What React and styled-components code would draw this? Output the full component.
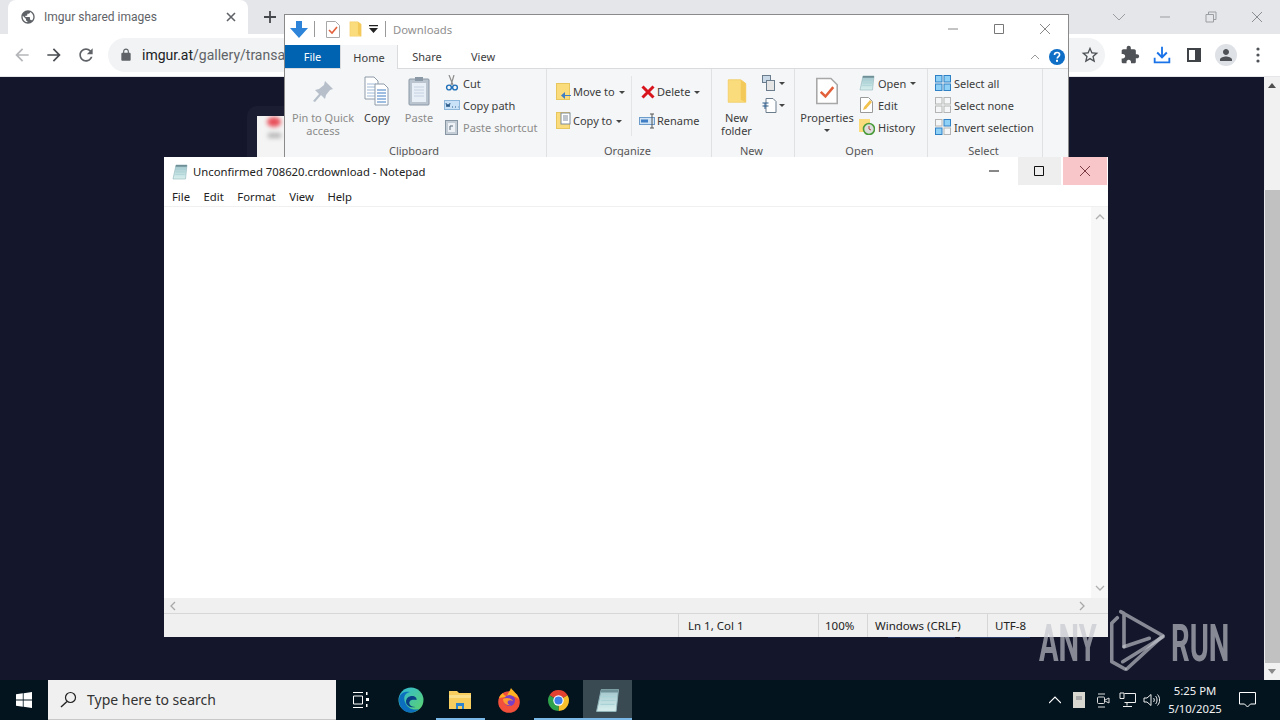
import React from 'react'
import styled, { createGlobalStyle } from 'styled-components'

const Global = createGlobalStyle`
  html, body { margin: 0; padding: 0; width: 1280px; height: 720px; overflow: hidden; background: #14172b; }
  * { box-sizing: border-box; }
`

const Desktop = styled.div`
  position: relative;
  width: 1280px;
  height: 720px;
  display: flex;
  flex-direction: column;
  overflow: hidden;
  font-family: "Noto Sans", sans-serif;
`

/* browser chrome */
const TabStrip = styled.div`
  height: 34px;
  flex-shrink: 0;
  background: #e4e6ea;
  display: flex;
  align-items: stretch;
  padding-left: 8px;
`
const Tab = styled.div`
  width: 240px;
  background: #fff;
  border-radius: 8px 8px 0 0;
  display: flex;
  align-items: center;
  padding: 0 11px 0 12px;
  color: #5f6368;
  font: 12px Roboto, sans-serif;
`
const TabTitle = styled.span`
  flex: 1;
  margin-left: 8px;
`
const NewTab = styled.div`
  width: 44px;
  display: flex;
  align-items: center;
  justify-content: center;
`
const StripControls = styled.div`
  margin-left: auto;
  display: flex;
  align-items: center;
`
const StripBtn = styled.div`
  width: 46px;
  height: 28px;
  display: flex;
  align-items: center;
  justify-content: center;
`
const Toolbar = styled.div`
  height: 43px;
  flex-shrink: 0;
  background: #fff;
  border-bottom: 1px solid #e4e6ea;
  display: flex;
  align-items: center;
  padding: 0 6px 1px 6px;
`
const NavBtn = styled.div`
  width: 32px;
  height: 32px;
  display: flex;
  align-items: center;
  justify-content: center;
`
const UrlPill = styled.div`
  flex: 1;
  height: 34px;
  margin: 0 9px 0 6px;
  background: #f1f3f4;
  border-radius: 17px;
  display: flex;
  align-items: center;
  padding: 0 5px 0 11px;
  font: 14px Roboto, sans-serif;
  color: #5f6368;
`
const Host = styled.span`
  margin-left: 9px;
  color: #202124;
`
const StarWrap = styled.div`
  margin-left: auto;
  display: flex;
`
const Avatar = styled.div`
  width: 22px;
  height: 22px;
  border-radius: 50%;
  background: #dee1e6;
  display: flex;
  align-items: center;
  justify-content: center;
`

/* page behind the windows */
const Page = styled.div`
  flex: 1;
  display: flex;
  min-height: 0;
`
const PageBody = styled.div`
  position: relative;
  flex: 1;
  background: #14172b;
  padding: 29px 0 0 247px;
`
const Card = styled.div`
  width: 200px;
  height: 200px;
  background: #1b1e33;
  border-radius: 10px;
  padding: 10px;
`
const Thumb = styled.div`
  width: 100%;
  height: 100%;
  background: #f4f4f4;
  position: relative;
  overflow: hidden;
`
const RedBlur = styled.div`
  position: absolute;
  left: 10px;
  top: 1px;
  width: 14px;
  height: 10px;
  border-radius: 50%;
  background: #e8505a;
  filter: blur(2px);
`
const GrayBlur = styled.div`
  position: absolute;
  left: 11px;
  top: 17px;
  width: 13px;
  height: 5px;
  background: #b5b5b5;
  filter: blur(2px);
`
const HiddenLinks = styled.div`
  position: absolute;
  left: 888px;
  top: 558px;
  display: flex;
  gap: 5px;
`
const HiddenLink = styled.div`
  width: ${p => p.$w}px;
  height: 3px;
  background: #2a3a6a;
`
const Scrollbar = styled.div`
  width: 16px;
  background: #f1f1f1;
  display: flex;
  flex-direction: column;
  align-items: center;
  justify-content: space-between;
  padding: 6px 0;
  position: relative;
`
const ScrollThumb = styled.div`
  position: absolute;
  left: 1px;
  right: 0;
  top: 113px;
  height: 473px;
  background: #c1c1c1;
`

/* taskbar */
const Taskbar = styled.div`
  height: 40px;
  flex-shrink: 0;
  background: #03141f;
  display: flex;
  align-items: stretch;
  color: #fff;
`
const StartBtn = styled.div`
  width: 48px;
  display: flex;
  align-items: center;
  justify-content: center;
`
const SearchBox = styled.div`
  width: 288px;
  background: #f0f0f0;
  border-bottom: 1px solid #c8c8c8;
  display: flex;
  align-items: center;
  padding-left: 12px;
  color: #333;
  font: 14px "Noto Sans", sans-serif;
`
const SearchText = styled.span`
  margin-left: 10px;
`
const TaskIcon = styled.div`
  width: ${p => p.$w || 49}px;
  margin-right: ${p => p.$mr || 0}px;
  display: flex;
  align-items: center;
  justify-content: center;
  background: ${p => (p.$active ? '#3a4a53' : 'transparent')};
  border-bottom: 2px solid ${p => (p.$open ? '#7ab8e8' : 'transparent')};
  border-top: 2px solid transparent;
`
const Tray = styled.div`
  margin-left: auto;
  display: flex;
  align-items: center;
`
const TrayIcon = styled.div`
  width: 24px;
  display: flex;
  justify-content: center;
`
const Clock = styled.div`
  width: 60px;
  margin-left: 2px;
  text-align: center;
  font: 11.3px/18px "Noto Sans", sans-serif;
  color: #f2f2f2;
`
const Notify = styled.div`
  width: 55px;
  padding-right: 11px;
  display: flex;
  justify-content: center;
`

/* explorer window */
const Explorer = styled.div`
  position: absolute;
  left: 284px;
  top: 14px;
  width: 785px;
  height: 143px;
  background: #fff;
  border: 1px solid #8a8a8a;
  border-bottom: 0;
  display: flex;
  flex-direction: column;
  font: 11px "Noto Sans", sans-serif;
  color: #3c3c3c;
`
const ExTitle = styled.div`
  height: 30px;
  flex-shrink: 0;
  display: flex;
  align-items: center;
  padding: 0 0 2px 5px;
`
const QuickSep = styled.div`
  width: 1px;
  height: 16px;
  background: #9a9a9a;
  margin: 0 ${p => p.$r}px 0 ${p => p.$l}px;
`
const QuickIcon = styled.div`
  width: ${p => p.$w}px;
  display: flex;
  justify-content: center;
`
const Dim = styled.span`
  color: #8f8f8f;
  font-size: 11.3px;
`
const ExControls = styled.div`
  margin-left: auto;
  display: flex;
  align-items: center;
`
const ExBtn = styled.div`
  width: 46px;
  display: flex;
  justify-content: center;
`
const ExTabs = styled.div`
  height: 24px;
  flex-shrink: 0;
  display: flex;
  align-items: stretch;
  border-bottom: 1px solid #dadbdc;
`
const FileTab = styled.div`
  width: 55px;
  background: #0063b1;
  color: #fff;
  display: flex;
  align-items: center;
  justify-content: center;
`
const HomeTab = styled.div`
  width: 58px;
  height: 24px;
  background: #f5f6f7;
  border: 1px solid #dadbdc;
  border-width: 0 1px;
  display: flex;
  align-items: center;
  justify-content: center;
`
const PlainTab = styled.div`
  width: ${p => p.$w}px;
  display: flex;
  align-items: center;
  justify-content: center;
`
const TabRight = styled.div`
  margin-left: auto;
  display: flex;
  align-items: center;
  gap: 9px;
  padding-right: 3px;
`
const Ribbon = styled.div`
  flex: 1;
  min-height: 0;
  background: #f5f6f7;
  display: flex;
  overflow: hidden;
`
const Group = styled.div`
  width: ${p => p.$w}px;
  flex-shrink: 0;
  border-right: 1px solid #dfe1e3;
  display: flex;
  flex-direction: column;
`
const GroupBody = styled.div`
  height: 75px;
  flex-shrink: 0;
  display: flex;
  padding: 3px 0 0 ${p => p.$pl || 0}px;
`
const GroupLabel = styled.div`
  text-align: center;
  line-height: 13px;
  padding-right: 3px;
  color: #555;
`
const LargeBtn = styled.div`
  width: ${p => p.$w}px;
  flex-shrink: 0;
  display: flex;
  flex-direction: column;
  align-items: center;
  text-align: center;
  line-height: 13px;
  white-space: nowrap;
  color: ${p => (p.$dim ? '#8b8b8b' : '#3c3c3c')};
`
const LargeIcon = styled.div`
  height: 38px;
  display: flex;
  align-items: center;
  margin-bottom: 1px;
`
const SmallCol = styled.div`
  display: flex;
  flex-direction: column;
  width: ${p => p.$w}px;
  flex-shrink: 0;
  margin-left: ${p => p.$ml || 0}px;
  padding-top: ${p => p.$pt || 0}px;
`
const SmallBtn = styled.div`
  height: ${p => p.$h || 22}px;
  display: flex;
  align-items: center;
  gap: ${p => (p.$tight ? 1 : 3)}px;
  white-space: nowrap;
  color: ${p => (p.$dim ? '#8b8b8b' : '#3c3c3c')};
`
const SmallIcon = styled.div`
  width: 17px;
  display: flex;
  justify-content: center;
  flex-shrink: 0;
`
const ColSep = styled.div`
  width: 1px;
  height: 60px;
  background: #e4e5e7;
  margin: 4px 7px 0 0;
`
const Caret = styled.span`
  display: block;
  margin: 1px 0 0 ${p => p.$ml || 0}px;
  border-style: solid;
  border-color: #444 transparent transparent;
  border-width: 3px 3px 0;
  width: 0;
  height: 0;
`
const LowCaret = styled(Caret)`
  margin-top: 5px;
`

/* notepad */
const Notepad = styled.div`
  position: absolute;
  left: 164px;
  top: 157px;
  width: 944px;
  height: 480px;
  background: #fff;
  display: flex;
  flex-direction: column;
  font: 11.3px "Noto Sans", sans-serif;
  color: #222;
`
const NpTitle = styled.div`
  height: 29px;
  flex-shrink: 0;
  display: flex;
  align-items: center;
  padding-left: 8px;
`
const NpTitleText = styled.span`
  margin-left: 5px;
`
const NpControls = styled.div`
  margin-left: auto;
  align-self: stretch;
  display: flex;
  gap: 2px;
  padding-right: 1px;
  height: 28px;
`
const NpBtn = styled.div`
  width: ${p => p.$w || 43}px;
  padding-right: ${p => p.$pr || 0}px;
  display: flex;
  align-items: center;
  justify-content: center;
  background: ${p => p.$bg || 'transparent'};
`
const NpMenu = styled.div`
  height: 21px;
  flex-shrink: 0;
  display: flex;
  align-items: center;
  padding-left: 8px;
  gap: 13.5px;
  border-bottom: 1px solid #f0f0f0;
`
const NpEdit = styled.div`
  flex: 1;
  display: flex;
  min-height: 0;
`
const NpText = styled.div`
  flex: 1;
  background: #fff;
`
const VBar = styled.div`
  width: 17px;
  background: #f7f7f7;
  display: flex;
  flex-direction: column;
  justify-content: space-between;
  align-items: center;
  padding: 5px 0;
`
const HBar = styled.div`
  height: 15px;
  flex-shrink: 0;
  background: #f0f0f0;
  display: flex;
  align-items: center;
  justify-content: space-between;
  padding: 0 21px 0 4px;
`
const NpStatus = styled.div`
  height: 24px;
  flex-shrink: 0;
  background: #f0f0f0;
  border-top: 1px solid #d7d7d7;
  display: flex;
  align-items: center;
  padding-left: 514px;
  font-size: 11.5px;
`
const StatusCell = styled.div`
  width: ${p => p.$w}px;
  flex-shrink: 0;
  height: 100%;
  border-left: 1px solid #d7d7d7;
  display: flex;
  align-items: center;
  padding-left: ${p => p.$pl}px;
  white-space: nowrap;
`

/* watermark */
const Watermark = styled.div`
  position: absolute;
  left: 1039px;
  top: 608px;
  height: 64px;
  display: flex;
  align-items: center;
  gap: 5px;
  color: rgba(196, 197, 205, 0.66);
  pointer-events: none;
`
const MarkText = styled.span`
  display: block;
  width: ${p => p.$w}px;
  font: 700 52px/64px Roboto, sans-serif;
  transform: scaleX(0.56);
  transform-origin: left center;
  white-space: nowrap;
  padding-top: 7px;
`

const S = ({ w = 16, h, vb = '0 0 16 16', children }) => (
  <svg width={w} height={h || w} viewBox={vb} style={{ display: 'block' }}>{children}</svg>
)
const M = ({ d, w = 20, fill = '#5f6368' }) => <S w={w} vb="0 0 24 24"><path d={d} fill={fill} /></S>

const Line = ({ w = 12, d, c = '#555', sw = 1 }) => (
  <S w={w} vb={`0 0 ${w} ${w}`}><path d={d} fill="none" stroke={c} strokeWidth={sw} /></S>
)

const ARROW_L = 'M20 11H7.83l5.59-5.59L12 4l-8 8 8 8 1.41-1.41L7.83 13H20v-2z'
const ARROW_R = 'M4 11h12.17l-5.59-5.59L12 4l8 8-8 8-1.41-1.41L16.17 13H4v-2z'
const RELOAD = 'M17.65 6.35C16.2 4.9 14.21 4 12 4c-4.42 0-7.99 3.58-7.99 8s3.57 8 7.99 8c3.73 0 6.84-2.55 7.73-6h-2.08c-.82 2.33-3.04 4-5.65 4-3.31 0-6-2.69-6-6s2.69-6 6-6c1.66 0 3.14.69 4.22 1.78L13 11h7V4l-2.35 2.35z'
const LOCK = 'M18 8h-1V6c0-2.76-2.24-5-5-5S7 3.24 7 6v2H6c-1.1 0-2 .9-2 2v10c0 1.1.9 2 2 2h12c1.1 0 2-.9 2-2V10c0-1.1-.9-2-2-2zM9 6c0-1.66 1.34-3 3-3s3 1.34 3 3v2H9V6z'
const STAR = 'M22 9.24l-7.19-.62L12 2 9.19 8.63 2 9.24l5.46 4.73L5.82 21 12 17.27 18.18 21l-1.63-7.03L22 9.24zM12 15.4l-3.76 2.27 1-4.28-3.32-2.88 4.38-.38L12 6.1l1.71 4.04 4.38.38-3.32 2.88 1 4.28L12 15.4z'
const PUZZLE = 'M20.5 11H19V7c0-1.1-.9-2-2-2h-4V3.5C13 2.12 11.88 1 10.5 1S8 2.12 8 3.5V5H4c-1.1 0-1.99.9-1.99 2v3.8H3.5c1.49 0 2.7 1.21 2.7 2.7s-1.21 2.7-2.7 2.7H2V20c0 1.1.9 2 2 2h3.8v-1.5c0-1.49 1.21-2.7 2.7-2.7 1.49 0 2.7 1.21 2.7 2.7V22H17c1.1 0 2-.9 2-2v-4h1.5c1.38 0 2.5-1.12 2.5-2.5S21.88 11 20.5 11z'
const PERSON = 'M12 12c2.21 0 4-1.79 4-4s-1.79-4-4-4-4 1.79-4 4 1.79 4 4 4zm0 2c-2.67 0-8 1.34-8 4v2h16v-2c0-2.66-5.33-4-8-4z'
const GLOBE = 'M12 2C6.48 2 2 6.48 2 12s4.48 10 10 10 10-4.48 10-10S17.52 2 12 2zm-1 17.93c-3.95-.49-7-3.85-7-7.93 0-.62.08-1.21.21-1.79L9 15v1c0 1.1.9 2 2 2v1.93zm6.9-2.54c-.26-.81-1-1.39-1.9-1.39h-1v-3c0-.55-.45-1-1-1H8v-2h2c.55 0 1-.45 1-1V7h2c1.1 0 2-.9 2-2v-.41c2.93 1.19 5 4.06 5 7.41 0 2.08-.8 3.97-2.1 5.39z'

const FolderGlyph = ({ w = 16, h = 20 }) => (
  <S w={w} h={h} vb="0 0 16 20">
    <path d="M1 1h10l4 3v15H1z" fill="#fbdc7c" stroke="#f0c95e" strokeWidth=".6" />
    <path d="M11 1v16l4 2V4z" fill="#f3c95a" />
  </S>
)
const CheckDoc = ({ w = 14, h = 17 }) => (
  <S w={w} h={h} vb="0 0 14 17">
    <path d="M.5.5h9l4 4v12H.5z" fill="#fff" stroke="#a8a8a8" />
    <path d="M3 9l3 3 5-6" fill="none" stroke="#e2603a" strokeWidth="1.6" />
  </S>
)
const PagesIcon = () => (
  <S w={26} h={30} vb="0 0 26 30">
    <path d="M1 1h9l4 4v18H1z" fill="#fff" stroke="#8d9aa8" />
    <path d="M3 8h9M3 11h9M3 14h9M3 17h9M3 20h9" stroke="#9db8d6" />
    <path d="M11 8h9l4 4v17H11z" fill="#fff" stroke="#8d9aa8" />
    <path d="M13 14h9M13 17h9M13 20h9M13 23h9M13 26h9" stroke="#3f7dc4" />
  </S>
)
const PasteIcon = () => (
  <S w={22} h={30} vb="0 0 22 30">
    <rect x="1" y="3" width="20" height="26" rx="1" fill="#b9c4cf" stroke="#8b98a6" />
    <rect x="4" y="7" width="14" height="19" fill="#e9eff6" />
    <path d="M6 11h10M6 14h10M6 17h10M6 20h10" stroke="#c4d2e2" />
    <rect x="7" y="1" width="8" height="4" fill="#8b98a6" />
  </S>
)
const PinIcon = () => (
  <S w={22} h={23} vb="0 0 22 23">
    <path d="M13 1l8 8-3 1-4 5-1 4-4-4-6 7-2-1 6-7-4-4 4-1 5-4z" fill="#b6bfca" />
  </S>
)
const Scissors = () => (
  <S w={14} h={16} vb="0 0 14 16">
    <path d="M9 0L6 10M4 0l4 10" stroke="#8d8d8d" strokeWidth="1.2" fill="none" />
    <circle cx="4" cy="12.5" r="2.4" fill="none" stroke="#1f6fb8" strokeWidth="1.4" />
    <circle cx="10" cy="12.5" r="2.4" fill="none" stroke="#1f6fb8" strokeWidth="1.4" />
  </S>
)
const PathIcon = () => (
  <S w={16} h={10} vb="0 0 16 10">
    <rect x=".5" y=".5" width="15" height="9" fill="#c9e2f7" stroke="#8db6da" />
    <path d="M2 3l1 4 1-3 1 3 1-4M8 7h1M11 7h1M14 7h.5" stroke="#2a5a8a" fill="none" />
  </S>
)
const ShortcutIcon = () => (
  <S w={13} h={16} vb="0 0 13 16">
    <rect x=".5" y="1.5" width="12" height="14" fill="#c4ccd5" stroke="#8895a3" />
    <rect x="3" y="4" width="7" height="9" fill="#eef2f6" />
    <path d="M5 11V7h3" stroke="#5a6b7c" fill="none" />
  </S>
)
const MoveIcon = ({ copy }) => (
  <S w={16} h={18} vb="0 0 16 18">
    <rect x=".5" y=".5" width="13" height="16" fill="#fbdc7c" stroke="#e8c65e" />
    {copy ? (
      <g>
        <rect x="5" y="1" width="9" height="11" fill="#fff" stroke="#7d8a98" />
        <path d="M7 4h5M7 6h5M7 8h5" stroke="#7d8a98" />
      </g>
    ) : (
      <path d="M15 12H9V9l-4 3.5L9 16v-3h6z" fill="#3f7dc4" />
    )}
  </S>
)
const DeleteX = () => (
  <S w={14} h={14} vb="0 0 14 14"><path d="M1.5 1.5l11 11M12.5 1.5l-11 11" stroke="#d8141c" strokeWidth="3" /></S>
)
const RenameIcon = () => (
  <S w={17} h={16} vb="0 0 17 16">
    <rect x=".5" y="4.5" width="15" height="7" fill="#cfe3f5" stroke="#6d9ccb" />
    <rect x="2" y="6.5" width="7" height="3" fill="#3f7dc4" />
    <path d="M11 1h4M13 1v14M11 15h4" stroke="#555" fill="none" />
  </S>
)
const NotepadIcon = ({ w = 16, h = 16, id = 'npg' }) => (
  <S w={w} h={h} vb="0 0 16 16">
    <defs>
      <linearGradient id={id} x1="0" y1="0" x2="0" y2="1">
        <stop offset="0" stopColor="#9fc4cb" />
        <stop offset="1" stopColor="#d8f0ee" />
      </linearGradient>
    </defs>
    <path d="M4 1h11l-1.500 14H1z" fill={`url(#${id})`} stroke="#8fb4ba" strokeWidth=".6" />
    <path d="M4 1h11l-.2 1.800H3.700z" fill="#6f8f96" />
    <path d="M4.500 5.500h9M4 8h9M3.500 10.500h9" stroke="#a8d2d6" strokeWidth=".7" />
  </S>
)
const EditIcon = () => (
  <S w={14} h={16} vb="0 0 14 16">
    <path d="M.5.5h8l4 4v11H.5z" fill="#fff" stroke="#9a9a9a" />
    <path d="M3 13l1-3 6-7 2 2-6 7z" fill="#f2c24e" />
  </S>
)
const HistoryIcon = () => (
  <S w={16} h={16} vb="0 0 16 16">
    <rect x="0" y="0" width="11" height="13" fill="#fbdc7c" />
    <circle cx="10" cy="10" r="5.5" fill="#ddd" stroke="#4a9b3a" strokeWidth="1.6" />
    <path d="M10 7v3l2 1" stroke="#b04040" fill="none" />
  </S>
)
const SelectGrid = ({ a = false, b = false }) => {
  const on = { fill: '#8fd0f7', stroke: '#2f80c4' }
  const off = { fill: 'none', stroke: '#b4b4b4' }
  const p = i => (i === 'a' ? (a ? on : off) : b ? on : off)
  return (
    <S w={16} h={16} vb="0 0 16 16">
      <rect x=".5" y=".5" width="6.5" height="6.5" {...p('a')} />
      <rect x="9" y=".5" width="6.5" height="6.5" {...p('b')} />
      <rect x=".5" y="9" width="6.5" height="6.5" {...p('b')} />
      <rect x="9" y="9" width="6.5" height="6.5" {...p('a')} />
    </S>
  )
}

const Edge = () => (
  <S w={26} vb="0 0 26 26">
    <defs>
      <linearGradient id="eg" x1="0" y1="0" x2="1" y2="1">
        <stop offset="0" stopColor="#2fb8d8" />
        <stop offset="1" stopColor="#5fd36a" />
      </linearGradient>
    </defs>
    <circle cx="13" cy="13" r="12.5" fill="url(#eg)" />
    <path d="M1 13C1 6 7 4 12 5c-5 1-7 5-5 10 2 6 8 9 14 7-3 3-7 3.500-9 3.500C6 25.500 1 20 1 13z" fill="#0c6fbe" />
    <path d="M8 15c0-4 3-6 6-6 3 0 5 2 4.500 4-4-1-8 0-7 4 .5 2 3 3 6 3-5 1-9-1-9.500-5z" fill="#0a3f86" />
  </S>
)
const Firefox = () => (
  <S w={24} h={26} vb="0 0 24 26">
    <circle cx="12" cy="15" r="10.800" fill="#f2503b" />
    <path d="M2 11c1-3 3-4 4-5 0 2 2 3 4 3 1-3 3-5 4-8 2 3 7 6 8 12-2-3-5-4-8-4z" fill="#ffb320" />
    <circle cx="12.500" cy="13.500" r="5.500" fill="#7a3fc4" />
    <path d="M6 12c3-2 8-1 10 2-2-1-4-1-5 0-1 2 0 4 3 4-4 1-8-2-8-6z" fill="#ff9a2e" />
  </S>
)
const Chrome = () => (
  <S w={25} vb="0 0 24 24">
    <path d="M12 12L3.300 7A10 10 0 0 1 20.700 7z" fill="#e3412f" />
    <path d="M12 12l8.700-5A10 10 0 0 1 12 22z" fill="#f7c02c" />
    <path d="M12 12v10A10 10 0 0 1 3.300 7z" fill="#2ea24a" />
    <circle cx="12" cy="12" r="5" fill="#fff" />
    <circle cx="12" cy="12" r="3.900" fill="#3d7fe6" />
  </S>
)

export default function App() {
  return (
    <Desktop>
      <Global />

      <TabStrip>
        <Tab>
          <M d={GLOBE} w={16} />
          <TabTitle>Imgur shared images</TabTitle>
          <Line d="M2 2l8 8M10 2l-8 8" c="#5f6368" sw={1.6} />
        </Tab>
        <NewTab><Line w={14} d="M7 1v12M1 7h12" c="#45484d" sw={1.8} /></NewTab>
        <StripControls>
          <StripBtn><Line d="M0 3l6 6 6-6" c="#9a9da1" /></StripBtn>
          <StripBtn><Line d="M1 6h10" c="#9a9da1" /></StripBtn>
          <StripBtn><Line d="M1 3.500h7.500v7.500H1zM3.500 3.500V1h7.500v7.500H8.500" c="#9a9da1" /></StripBtn>
          <StripBtn><Line d="M1 1l10 10M11 1L1 11" c="#8a8d91" /></StripBtn>
        </StripControls>
      </TabStrip>

      <Toolbar>
        <NavBtn><M d={ARROW_L} fill="#b4b6b9" /></NavBtn>
        <NavBtn><M d={ARROW_R} fill="#4a4d52" /></NavBtn>
        <NavBtn><M d={RELOAD} fill="#5f6368" /></NavBtn>
        <UrlPill>
          <M d={LOCK} w={14} />
          <Host>imgur.at</Host>/gallery/transa
          <StarWrap><M d={STAR} w={20} fill="#4f5257" /></StarWrap>
        </UrlPill>
        <NavBtn><M d={PUZZLE} fill="#4f5257" /></NavBtn>
        <NavBtn><M d="M11 3h2v9l3.500-3.500L18 10l-6 6-6-6 1.500-1.500L11 12zM3 15h2v4h14v-4h2v6H3z" w={22} fill="#1a73e8" /></NavBtn>
        <NavBtn>
          <S w={14} vb="0 0 14 14"><rect x="1" y="1" width="12" height="12" fill="none" stroke="#3f4246" strokeWidth="2" /><rect x="8" y="1" width="5" height="12" fill="#3f4246" /></S>
        </NavBtn>
        <NavBtn><Avatar><M d={PERSON} w={18} fill="#4f5257" /></Avatar></NavBtn>
        <NavBtn>
          <S w={4} h={16} vb="0 0 4 16"><circle cx="2" cy="2" r="1.600" fill="#4f5257" /><circle cx="2" cy="8" r="1.600" fill="#4f5257" /><circle cx="2" cy="14" r="1.600" fill="#4f5257" /></S>
        </NavBtn>
      </Toolbar>

      <Page>
        <PageBody>
          <Card>
            <Thumb><RedBlur /><GrayBlur /></Thumb>
          </Card>
          <HiddenLinks>
            <HiddenLink $w={67} />
            <HiddenLink $w={70} />
          </HiddenLinks>
        </PageBody>
        <Scrollbar>
          <ScrollThumb />
          <S w={8} h={5} vb="0 0 8 5"><path d="M4 0l4 5H0z" fill="#505050" /></S>
          <S w={8} h={5} vb="0 0 8 5"><path d="M4 5L0 0h8z" fill="#8a8a8a" /></S>
        </Scrollbar>
      </Page>

      <Taskbar>
        <StartBtn>
          <S w={16} vb="0 0 16 16"><path d="M0 2.300l6.800-1v6.300H0zM7.600 1.200L16 0v7.600H7.600zM0 8.400h6.800v6.300l-6.800-1zM7.600 8.400H16V16l-8.400-1.200z" fill="#fff" /></S>
        </StartBtn>
        <SearchBox>
          <S w={17} vb="0 0 17 17"><circle cx="10.500" cy="6.500" r="5" fill="none" stroke="#222" strokeWidth="1.200" /><path d="M7 10.500L1 16" stroke="#222" strokeWidth="1.400" /></S>
          <SearchText>Type here to search</SearchText>
        </SearchBox>
        <TaskIcon $w={48} $mr={2.5}>
          <S w={17} h={16} vb="0 0 17 16">
            <path d="M1 .5h10M1 15.500h10M1.500 4h9v8h-9z" fill="none" stroke="#fff" />
            <path d="M14 0h1.500v3H14zM14 6h3v3h-3zM14 12h1.500v3H14z" fill="#fff" />
          </S>
        </TaskIcon>
        <TaskIcon><Edge /></TaskIcon>
        <TaskIcon $open>
          <S w={24} h={22} vb="0 0 24 22">
            <path d="M1 2h8l2 2h12v16H1z" fill="#f8cf5e" />
            <rect x="1" y="6" width="22" height="3" fill="#fbe08c" />
            <path d="M8 14h8v6h-2v-3h-4v3H8z" fill="#2f86cf" />
          </S>
        </TaskIcon>
        <TaskIcon><Firefox /></TaskIcon>
        <TaskIcon $open><Chrome /></TaskIcon>
        <TaskIcon $open $active><NotepadIcon w={25} h={25} id="npg2" /></TaskIcon>
        <Tray>
          <TrayIcon><Line d="M0 9l6-6 6 6" c="#fff" sw={1.200} /></TrayIcon>
          <TrayIcon><S w={12} h={16} vb="0 0 12 16"><rect width="12" height="16" fill="#d8d8d0" /><rect x="3" y="4" width="6" height="4" fill="#aaa" /></S></TrayIcon>
          <TrayIcon>
            <S w={14} h={18} vb="0 0 14 18">
              <rect x="1.500" y="6" width="7" height="6.500" rx="1" fill="none" stroke="#ddd" />
              <path d="M9 9l4-2v5l-4-2M2 3h7M2 16h7" fill="none" stroke="#ddd" />
            </S>
          </TrayIcon>
          <TrayIcon>
            <S w={17} h={16} vb="0 0 17 16">
              <path d="M5.500 1.500h11v9h-11M1 1v5.500h4V1zM8 10.500v3M4 14.500h9" fill="none" stroke="#eee" />
            </S>
          </TrayIcon>
          <TrayIcon>
            <S w={17} h={14} vb="0 0 17 14">
              <path d="M1 5h3l4-3.500v11L4 9H1zM10.500 5c1 1 1 3 0 4M12.500 3c2 2 2 6 0 8M14.500 1.500c2.800 3 2.800 8 0 11" fill="none" stroke="#eee" />
            </S>
          </TrayIcon>
          <Clock>5:25 PM<br />5/10/2025</Clock>
          <Notify>
            <S w={17} h={16} vb="0 0 17 16"><path d="M.5.500h16v11.500h-5L8.500 15 5.500 12h-5z" fill="none" stroke="#fff" /></S>
          </Notify>
        </Tray>
      </Taskbar>

      <Explorer>
        <ExTitle>
          <S w={18} h={17} vb="0 0 18 17"><path d="M6 0h6v7h6l-9 10L0 7h6z" fill="#2d84d8" /></S>
          <QuickSep $l={6} $r={7} />
          <QuickIcon $w={22}><CheckDoc /></QuickIcon>
          <QuickIcon $w={22}><FolderGlyph w={13} h={16} /></QuickIcon>
          <QuickIcon $w={14}><S w={9} h={8} vb="0 0 9 8"><path d="M0 0h9v1.200H0zM0 3h9L4.500 8z" fill="#222" /></S></QuickIcon>
          <QuickSep $l={5} $r={7} />
          <Dim>Downloads</Dim>
          <ExControls>
            <ExBtn><Line d="M1 6h10" c="#888" /></ExBtn>
            <ExBtn><Line d="M1.500 1.500h9v9h-9z" c="#777" /></ExBtn>
            <ExBtn><Line d="M1 1l10 10M11 1L1 11" c="#888" /></ExBtn>
          </ExControls>
        </ExTitle>
        <ExTabs>
          <FileTab>File</FileTab>
          <HomeTab>Home</HomeTab>
          <PlainTab $w={58}>Share</PlainTab>
          <PlainTab $w={54}>View</PlainTab>
          <TabRight>
            <Line w={10} d="M1 7l4-4 4 4" c="#999" />
            <S w={16} vb="0 0 16 16">
              <circle cx="8" cy="8" r="8" fill="#0f6fc6" />
              <path d="M5.500 6c0-1.600 1.200-2.500 2.600-2.500s2.500.9 2.500 2.200c0 1.900-2.400 1.900-2.400 3.800" fill="none" stroke="#fff" strokeWidth="1.600" />
              <rect x="7" y="10.800" width="2" height="2" fill="#fff" />
            </S>
          </TabRight>
        </ExTabs>
        <Ribbon>
          <Group $w={262}>
            <GroupBody $pl={7}>
              <LargeBtn $w={62} $dim><LargeIcon><PinIcon /></LargeIcon>Pin to Quick<br />access</LargeBtn>
              <LargeBtn $w={46}><LargeIcon><PagesIcon /></LargeIcon>Copy</LargeBtn>
              <LargeBtn $w={38} $dim><LargeIcon><PasteIcon /></LargeIcon>Paste</LargeBtn>
              <SmallCol $w={100} $ml={5}>
                <SmallBtn><SmallIcon><Scissors /></SmallIcon>Cut</SmallBtn>
                <SmallBtn><SmallIcon><PathIcon /></SmallIcon>Copy path</SmallBtn>
                <SmallBtn $dim><SmallIcon><ShortcutIcon /></SmallIcon>Paste shortcut</SmallBtn>
              </SmallCol>
            </GroupBody>
            <GroupLabel>Clipboard</GroupLabel>
          </Group>
          <Group $w={165}>
            <GroupBody $pl={8}>
              <SmallCol $w={76} $pt={5}>
                <SmallBtn $h={29} $tight><SmallIcon><MoveIcon /></SmallIcon>Move to<Caret $ml={3} /></SmallBtn>
                <SmallBtn $h={29} $tight><SmallIcon><MoveIcon copy /></SmallIcon>Copy to<Caret $ml={3} /></SmallBtn>
              </SmallCol>
              <ColSep />
              <SmallCol $w={72} $pt={5}>
                <SmallBtn $h={29} $tight><SmallIcon><DeleteX /></SmallIcon>Delete<Caret $ml={3} /></SmallBtn>
                <SmallBtn $h={29} $tight><SmallIcon><RenameIcon /></SmallIcon>Rename</SmallBtn>
              </SmallCol>
            </GroupBody>
            <GroupLabel>Organize</GroupLabel>
          </Group>
          <Group $w={83}>
            <GroupBody>
              <LargeBtn $w={49}><LargeIcon><FolderGlyph w={20} h={28} /></LargeIcon>New<br />folder</LargeBtn>
              <SmallCol $w={30}>
                <SmallBtn $tight><SmallIcon><S w={16} vb="0 0 16 16"><rect x=".5" y=".5" width="8" height="7" fill="#c9d9e8" stroke="#6b7c8c" /><rect x="4.500" y="5.500" width="8" height="10" fill="#e5e5e5" stroke="#6b7c8c" /></S></SmallIcon><Caret /></SmallBtn>
                <SmallBtn $tight><SmallIcon><S w={15} vb="0 0 15 15"><path d="M4 .5h7l3 3v11H4z" fill="#fff" stroke="#6b7c8c" /><path d="M.5 5h6M.5 8h6M3 5v6" stroke="#2a5a8a" fill="none" /></S></SmallIcon><Caret /></SmallBtn>
              </SmallCol>
            </GroupBody>
            <GroupLabel>New</GroupLabel>
          </Group>
          <Group $w={133}>
            <GroupBody $pl={4}>
              <LargeBtn $w={56}>
                <LargeIcon><CheckDoc w={22} h={28} /></LargeIcon>Properties<LowCaret />
              </LargeBtn>
              <SmallCol $w={70} $ml={3}>
                <SmallBtn><SmallIcon><NotepadIcon id="npg3" /></SmallIcon>Open<Caret $ml={1} /></SmallBtn>
                <SmallBtn><SmallIcon><EditIcon /></SmallIcon>Edit</SmallBtn>
                <SmallBtn><SmallIcon><HistoryIcon /></SmallIcon>History</SmallBtn>
              </SmallCol>
            </GroupBody>
            <GroupLabel>Open</GroupLabel>
          </Group>
          <Group $w={115}>
            <GroupBody $pl={6}>
              <SmallCol $w={104}>
                <SmallBtn><SmallIcon><SelectGrid a b /></SmallIcon>Select all</SmallBtn>
                <SmallBtn><SmallIcon><SelectGrid /></SmallIcon>Select none</SmallBtn>
                <SmallBtn><SmallIcon><SelectGrid b /></SmallIcon>Invert selection</SmallBtn>
              </SmallCol>
            </GroupBody>
            <GroupLabel>Select</GroupLabel>
          </Group>
        </Ribbon>
      </Explorer>

      <Notepad>
        <NpTitle>
          <NotepadIcon id="npg1" />
          <NpTitleText>Unconfirmed 708620.crdownload - Notepad</NpTitleText>
          <NpControls>
            <NpBtn $pr={2}><Line d="M1 6h10" c="#111" /></NpBtn>
            <NpBtn $pr={2} $bg="#eeeeee"><Line d="M1.500 1.500h9v9h-9z" c="#111" /></NpBtn>
            <NpBtn $w={44} $bg="#f8c6c9"><Line d="M1 1l10 10M11 1L1 11" c="#7a3b40" /></NpBtn>
          </NpControls>
        </NpTitle>
        <NpMenu>
          <span>File</span>
          <span>Edit</span>
          <span>Format</span>
          <span>View</span>
          <span>Help</span>
        </NpMenu>
        <NpEdit>
          <NpText />
          <VBar>
            <Line w={10} d="M1 7l4-4 4 4" c="#b0b0b0" sw={1.300} />
            <Line w={10} d="M1 3l4 4 4-4" c="#b0b0b0" sw={1.300} />
          </VBar>
        </NpEdit>
        <HBar>
          <Line w={10} d="M7 1L3 5l4 4" c="#a8a8a8" sw={1.300} />
          <Line w={10} d="M3 1l4 4-4 4" c="#a8a8a8" sw={1.300} />
        </HBar>
        <NpStatus>
          <StatusCell $w={140} $pl={9}>Ln 1, Col 1</StatusCell>
          <StatusCell $w={49} $pl={6}>100%</StatusCell>
          <StatusCell $w={120} $pl={7}>Windows (CRLF)</StatusCell>
          <StatusCell $w={120} $pl={7}>UTF-8</StatusCell>
        </NpStatus>
      </Notepad>

      <Watermark>
        <MarkText $w={66}>ANY</MarkText>
        <S w={56} h={64} vb="0 0 56 64">
          <g fill="none" stroke="currentColor" strokeWidth="3.600" strokeLinejoin="round" strokeLinecap="round">
            <path d="M7.300 9.700L1.700 15.300V53.700L15 61" />
            <path d="M14 38.700V5.300L10.700 3.700L53 27.700L16.700 61" />
            <path d="M14 38.700L39.300 30.300" />
            <path d="M12.700 53.700L53 28.700" />
          </g>
        </S>
        <MarkText $w={62}>RUN</MarkText>
      </Watermark>
    </Desktop>
  )
}
